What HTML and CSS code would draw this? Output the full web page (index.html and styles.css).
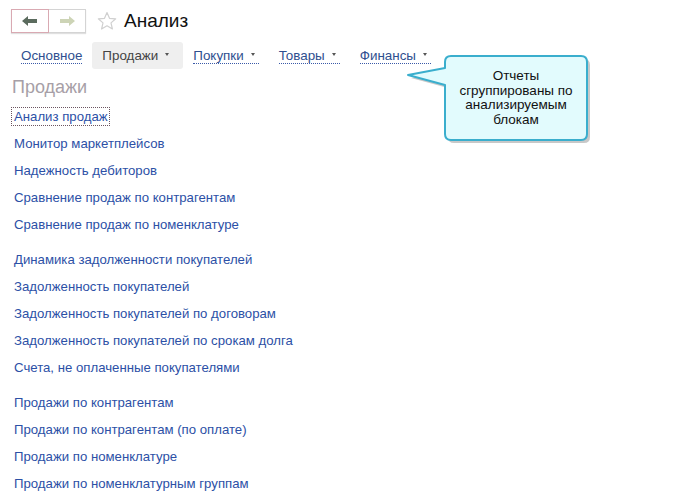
FILE: index.html
```html
<!DOCTYPE html>
<html lang="ru">
<head>
  <meta charset="UTF-8">
  <title>Анализ</title>
  <link rel="stylesheet" href="styles.css">
</head>
<body>
  <div class="page">
    <div class="title-bar">
      <div class="nav-buttons">
        <div class="nav-btn back">
          <svg width="16" height="10" viewBox="0 0 16 10"><path d="M0 5 L6 0 L6 3 L15 3 L15 7 L6 7 L6 10 Z" fill="#5b6b5e"/></svg>
        </div>
        <div class="nav-btn forward">
          <svg width="16" height="10" viewBox="0 0 16 10"><path d="M16 5 L10 0 L10 3 L1 3 L1 7 L10 7 L10 10 Z" fill="#cdd4b6"/></svg>
        </div>
      </div>
      <svg class="star" width="20" height="20" viewBox="0 0 20 20"><path d="M10 1.5 L12.5 7.3 L18.7 7.8 L14 11.9 L15.4 18 L10 14.8 L4.6 18 L6 11.9 L1.3 7.8 L7.5 7.3 Z" fill="none" stroke="#d0d0d0" stroke-width="1.2" stroke-linejoin="round"/></svg>
      <h1 class="page-title">Анализ</h1>
    </div>

    <div class="tabs">
      <div class="tab"><span class="tab-label">Основное</span></div>
      <div class="tab active"><span class="tab-label">Продажи<i class="caret"></i></span></div>
      <div class="tab"><span class="tab-label">Покупки<i class="caret"></i></span></div>
      <div class="tab"><span class="tab-label">Товары<i class="caret"></i></span></div>
      <div class="tab"><span class="tab-label">Финансы<i class="caret"></i></span></div>
    </div>

    <div class="section">
      <h2 class="section-title">Продажи</h2>
      <ul class="group">
        <li><a href="#" class="focused">Анализ продаж</a></li>
        <li><a href="#">Монитор маркетплейсов</a></li>
        <li><a href="#">Надежность дебиторов</a></li>
        <li><a href="#">Сравнение продаж по контрагентам</a></li>
        <li><a href="#">Сравнение продаж по номенклатуре</a></li>
      </ul>
      <ul class="group">
        <li><a href="#">Динамика задолженности покупателей</a></li>
        <li><a href="#">Задолженность покупателей</a></li>
        <li><a href="#">Задолженность покупателей по договорам</a></li>
        <li><a href="#">Задолженность покупателей по срокам долга</a></li>
        <li><a href="#">Счета, не оплаченные покупателями</a></li>
      </ul>
      <ul class="group">
        <li><a href="#">Продажи по контрагентам</a></li>
        <li><a href="#">Продажи по контрагентам (по оплате)</a></li>
        <li><a href="#">Продажи по номенклатуре</a></li>
        <li><a href="#">Продажи по номенклатурным группам</a></li>
      </ul>
    </div>

    <!-- callout over the page -->
    <div class="callout">
      <svg class="callout-shape" width="200" height="100" viewBox="0 0 200 100">
        <path d="M47 10 Q47 4 53 4 L183 4 Q189 4 189 10 L189 82 Q189 88 183 88 L53 88 Q47 88 47 82 L47 33 L10 23 L47 16 Z" fill="#9a9a9a" opacity="0.55" transform="translate(3,3)"/>
        <path d="M47 10 Q47 4 53 4 L183 4 Q189 4 189 10 L189 82 Q189 88 183 88 L53 88 Q47 88 47 82 L47 33 L10 23 L47 16 Z" fill="#e2fbfd" stroke="#3aaecd" stroke-width="2" stroke-linejoin="round"/>
      </svg>
      <div class="callout-text">Отчеты<br>сгруппированы по<br>анализируемым<br>блокам</div>
    </div>
  </div>
</body>
</html>
```

FILE: styles.css
```css
body {
  margin: 0;
  background: #fff;
  font-family: "Liberation Sans", Arial, sans-serif;
  color: #333;
}

.page {
  position: relative;
  width: 681px;
  height: 500px;
  overflow: hidden;
}

.title-bar {
  display: flex;
  align-items: center;
  padding: 9px 0 0 11px;
  height: 24px;
}

.nav-buttons {
  display: flex;
  box-shadow: 0 1px 1px rgba(0, 0, 0, 0.12);
}

.nav-btn {
  width: 36px;
  height: 22px;
  display: flex;
  align-items: center;
  justify-content: center;
  background: #fff;
  border: 1px solid #d4d4d4;
}

.nav-btn.back {
  border-color: #d9a9b2;
}

.nav-btn.forward {
  border-left: none;
}

.star {
  margin-left: 11px;
}

.page-title {
  margin: 0 0 0 7px;
  font-size: 19px;
  font-weight: normal;
  color: #111;
  line-height: 24px;
}

.tabs {
  display: flex;
  margin: 9px 0 0 11px;
}

.tab {
  height: 27px;
  padding: 0 10px;
  display: flex;
  align-items: center;
  border-radius: 3px;
}

.tab.active {
  background: #efefef;
}

.tab-label {
  font-size: 13.4px;
  color: #2f4f8f;
  line-height: 15px;
  border-bottom: 1px dotted #3a5aa8;
}

.tab.active .tab-label {
  color: #444;
  border-bottom-color: transparent;
}

.caret {
  display: inline-block;
  margin: 0 4px 0 7px;
  width: 0;
  height: 0;
  border-left: 2.5px solid transparent;
  border-right: 2.5px solid transparent;
  border-top: 3px solid #555;
  vertical-align: middle;
  position: relative;
  top: -1px;
}

.section {
  padding-left: 12px;
}

.section-title {
  margin: 7px 0 0 0;
  font-size: 18px;
  font-weight: normal;
  color: #a79fa7;
  line-height: 22px;
}

.group {
  list-style: none;
  margin: 0 0 8px 0;
  padding: 0;
}

.group:first-of-type {
  margin-top: 5px;
}

.group li {
  height: 27px;
  display: flex;
  align-items: center;
}

.group a {
  font-size: 13.2px;
  color: #2c50a6;
  text-decoration: none;
  padding: 1px;
  border: 1px solid transparent;
}

.group a.focused {
  border: 1px dotted #6b5560;
  margin-left: -1px;
  padding-left: 2px;
}

.callout {
  position: absolute;
  left: 398px;
  top: 52px;
  width: 200px;
  height: 100px;
}

.callout-shape {
  position: absolute;
  left: 0;
  top: 0;
}

.callout-text {
  position: absolute;
  left: 47px;
  top: 17px;
  width: 142px;
  text-align: center;
  font-size: 13.5px;
  line-height: 14.7px;
  color: #111;
}
```
